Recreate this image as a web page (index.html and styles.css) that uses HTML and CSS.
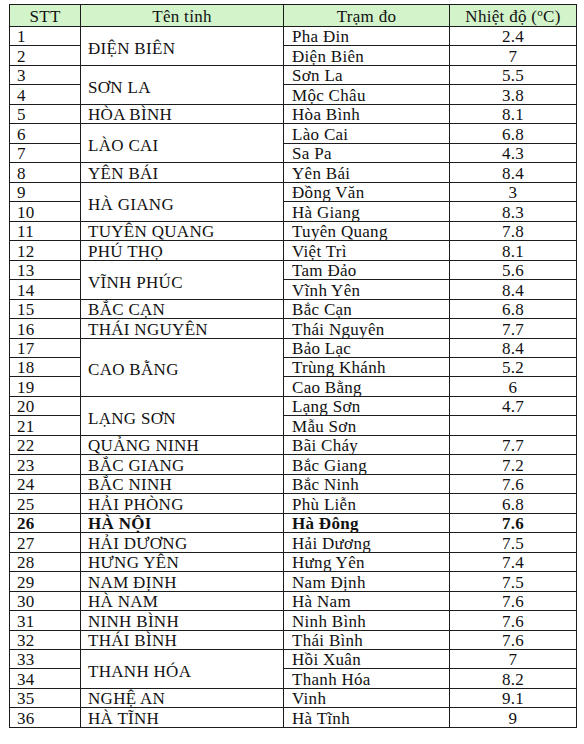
FILE: index.html
```html
<!DOCTYPE html>
<html lang="vi">
<head>
<meta charset="utf-8">
<title>Nhiệt độ</title>
<link rel="stylesheet" href="styles.css">
</head>
<body>
<table class="tbl">
<colgroup><col class="c1"><col class="c2"><col class="c3"><col class="c4"></colgroup>
<thead>
<tr class="head"><th>STT</th><th>Tên tỉnh</th><th>Trạm đo</th><th>Nhiệt độ (<sup>o</sup>C)</th></tr>
</thead>
<tbody>
<tr><td class="n">1</td><td class="p m" rowspan="2">ĐIỆN BIÊN</td><td class="s">Pha Đin</td><td class="v">2.4</td></tr>
<tr><td class="n">2</td><td class="s">Điện Biên</td><td class="v">7</td></tr>
<tr><td class="n">3</td><td class="p m" rowspan="2">SƠN LA</td><td class="s">Sơn La</td><td class="v">5.5</td></tr>
<tr><td class="n">4</td><td class="s">Mộc Châu</td><td class="v">3.8</td></tr>
<tr><td class="n">5</td><td class="p">HÒA BÌNH</td><td class="s">Hòa Bình</td><td class="v">8.1</td></tr>
<tr><td class="n">6</td><td class="p m" rowspan="2">LÀO CAI</td><td class="s">Lào Cai</td><td class="v">6.8</td></tr>
<tr><td class="n">7</td><td class="s">Sa Pa</td><td class="v">4.3</td></tr>
<tr><td class="n">8</td><td class="p">YÊN BÁI</td><td class="s">Yên Bái</td><td class="v">8.4</td></tr>
<tr><td class="n">9</td><td class="p m" rowspan="2">HÀ GIANG</td><td class="s">Đồng Văn</td><td class="v">3</td></tr>
<tr><td class="n">10</td><td class="s">Hà Giang</td><td class="v">8.3</td></tr>
<tr><td class="n">11</td><td class="p">TUYÊN QUANG</td><td class="s">Tuyên Quang</td><td class="v">7.8</td></tr>
<tr><td class="n">12</td><td class="p">PHÚ THỌ</td><td class="s">Việt Trì</td><td class="v">8.1</td></tr>
<tr><td class="n">13</td><td class="p m" rowspan="2">VĨNH PHÚC</td><td class="s">Tam Đảo</td><td class="v">5.6</td></tr>
<tr><td class="n">14</td><td class="s">Vĩnh Yên</td><td class="v">8.4</td></tr>
<tr><td class="n">15</td><td class="p">BẮC CẠN</td><td class="s">Bắc Cạn</td><td class="v">6.8</td></tr>
<tr><td class="n">16</td><td class="p">THÁI NGUYÊN</td><td class="s">Thái Nguyên</td><td class="v">7.7</td></tr>
<tr><td class="n">17</td><td class="p m" rowspan="3">CAO BẰNG</td><td class="s">Bảo Lạc</td><td class="v">8.4</td></tr>
<tr><td class="n">18</td><td class="s">Trùng Khánh</td><td class="v">5.2</td></tr>
<tr><td class="n">19</td><td class="s">Cao Bằng</td><td class="v">6</td></tr>
<tr><td class="n">20</td><td class="p m" rowspan="2">LẠNG SƠN</td><td class="s">Lạng Sơn</td><td class="v">4.7</td></tr>
<tr><td class="n">21</td><td class="s">Mẫu Sơn</td><td class="v"></td></tr>
<tr><td class="n">22</td><td class="p">QUẢNG NINH</td><td class="s">Bãi Cháy</td><td class="v">7.7</td></tr>
<tr><td class="n">23</td><td class="p">BẮC GIANG</td><td class="s">Bắc Giang</td><td class="v">7.2</td></tr>
<tr><td class="n">24</td><td class="p">BẮC NINH</td><td class="s">Bắc Ninh</td><td class="v">7.6</td></tr>
<tr><td class="n">25</td><td class="p">HẢI PHÒNG</td><td class="s">Phù Liễn</td><td class="v">6.8</td></tr>
<tr class="bold"><td class="n">26</td><td class="p">HÀ NỘI</td><td class="s">Hà Đông</td><td class="v">7.6</td></tr>
<tr><td class="n">27</td><td class="p">HẢI DƯƠNG</td><td class="s">Hải Dương</td><td class="v">7.5</td></tr>
<tr><td class="n">28</td><td class="p">HƯNG YÊN</td><td class="s">Hưng Yên</td><td class="v">7.4</td></tr>
<tr><td class="n">29</td><td class="p">NAM ĐỊNH</td><td class="s">Nam Định</td><td class="v">7.5</td></tr>
<tr><td class="n">30</td><td class="p">HÀ NAM</td><td class="s">Hà Nam</td><td class="v">7.6</td></tr>
<tr><td class="n">31</td><td class="p">NINH BÌNH</td><td class="s">Ninh Bình</td><td class="v">7.6</td></tr>
<tr><td class="n">32</td><td class="p">THÁI BÌNH</td><td class="s">Thái Bình</td><td class="v">7.6</td></tr>
<tr><td class="n">33</td><td class="p m" rowspan="2">THANH HÓA</td><td class="s">Hồi Xuân</td><td class="v">7</td></tr>
<tr><td class="n">34</td><td class="s">Thanh Hóa</td><td class="v">8.2</td></tr>
<tr><td class="n">35</td><td class="p">NGHỆ AN</td><td class="s">Vinh</td><td class="v">9.1</td></tr>
<tr><td class="n">36</td><td class="p">HÀ TĨNH</td><td class="s">Hà Tĩnh</td><td class="v">9</td></tr>
</tbody>
</table>
</body>
</html>
```
FILE: styles.css
```css
html, body {
  margin: 0;
  padding: 0;
  background: #ffffff;
}
body {
  padding: 4px 0 0 9px;
  font-family: "Liberation Serif", "Times New Roman", serif;
  font-size: 17px;
  letter-spacing: 0.3px;
  color: #111111;
}
.tbl {
  border-collapse: collapse;
  table-layout: fixed;
  width: 567px;
  font-size: 17px;
}
.c1 { width: 71px; }
.c2 { width: 203px; }
.c3 { width: 166px; }
.c4 { width: 127px; }
.tbl th,
.tbl td {
  border: 1px solid #1c1c1c;
  padding: 0;
  line-height: 17px;
  white-space: nowrap;
  overflow: visible;
}
.tbl .head {
  height: 22px;
  background: #d3f3cb;
}
.tbl .head th {
  font-weight: normal;
  text-align: center;
  vertical-align: middle;
  padding-top: 1px;
}
.tbl .head sup {
  font-size: 11px;
  vertical-align: 6px;
  line-height: 0;
}
.tbl tbody tr {
  height: 19.47px;
}
.tbl tbody td {
  vertical-align: bottom;
}
.tbl .n {
  text-align: left;
  padding-left: 7px;
}
.tbl .p {
  text-align: left;
  padding-left: 7px;
}
.tbl .p.m {
  vertical-align: middle;
  padding-top: 5px;
}
.tbl .s {
  text-align: left;
  padding-left: 8px;
}
.tbl .v {
  text-align: center;
}
.tbl .bold td {
  font-weight: bold;
}
```
